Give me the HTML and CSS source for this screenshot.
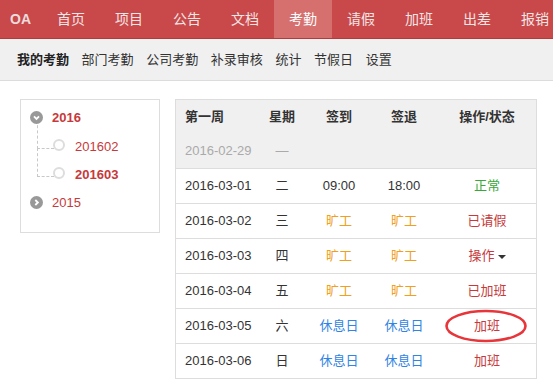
FILE: index.html
```html
<!DOCTYPE html>
<html lang="zh">
<head>
<meta charset="utf-8">
<title>OA 考勤</title>
<link rel="stylesheet" href="styles.css">
</head>
<body>
<header class="navbar">
  <div class="brand">OA</div>
  <nav class="nav">
    <a class="nav-item">首页</a>
    <a class="nav-item">项目</a>
    <a class="nav-item">公告</a>
    <a class="nav-item">文档</a>
    <a class="nav-item active">考勤</a>
    <a class="nav-item">请假</a>
    <a class="nav-item">加班</a>
    <a class="nav-item">出差</a>
    <a class="nav-item">报销</a>
  </nav>
</header>
<div class="subnav">
  <a class="sub-item current">我的考勤</a>
  <a class="sub-item">部门考勤</a>
  <a class="sub-item">公司考勤</a>
  <a class="sub-item">补录审核</a>
  <a class="sub-item">统计</a>
  <a class="sub-item">节假日</a>
  <a class="sub-item">设置</a>
</div>
<main class="main">
  <aside class="tree-box">
    <ul class="tree">
      <li class="year open">
        <div class="row first">
          <svg class="toggle" width="13" height="13" viewBox="0 0 13 13"><circle cx="6.5" cy="6.5" r="6.5" fill="#999"/><path d="M4 5.3 L6.5 7.9 L9 5.3" fill="none" stroke="#fff" stroke-width="1.8"/></svg>
          <span class="label bold">2016</span>
        </div>
        <ul class="children">
          <li class="child"><span class="conn"></span><span class="dot"></span><span class="label">201602</span></li>
          <li class="child"><span class="conn"></span><span class="dot"></span><span class="label bold">201603</span></li>
        </ul>
      </li>
      <li class="year">
        <div class="row">
          <svg class="toggle" width="13" height="13" viewBox="0 0 13 13"><circle cx="6.5" cy="6.5" r="6.5" fill="#999"/><path d="M5.3 4 L7.9 6.5 L5.3 9" fill="none" stroke="#fff" stroke-width="1.8"/></svg>
          <span class="label">2015</span>
        </div>
      </li>
    </ul>
  </aside>
  <table class="att">
    <colgroup>
      <col class="c1"><col class="c2"><col class="c3"><col class="c4"><col class="c5">
    </colgroup>
    <thead>
      <tr class="head">
        <th class="left">第一周</th><th>星期</th><th>签到</th><th>签退</th><th>操作/状态</th>
      </tr>
    </thead>
    <tbody>
      <tr class="off">
        <td class="left">2016-02-29</td><td>—</td><td></td><td></td><td></td>
      </tr>
      <tr>
        <td class="left">2016-03-01</td><td>二</td><td>09:00</td><td>18:00</td><td class="green">正常</td>
      </tr>
      <tr>
        <td class="left">2016-03-02</td><td>三</td><td class="orange">旷工</td><td class="orange">旷工</td><td class="red">已请假</td>
      </tr>
      <tr>
        <td class="left">2016-03-03</td><td>四</td><td class="orange">旷工</td><td class="orange">旷工</td><td class="red">操作<span class="caret"></span></td>
      </tr>
      <tr>
        <td class="left">2016-03-04</td><td>五</td><td class="orange">旷工</td><td class="orange">旷工</td><td class="red">已加班</td>
      </tr>
      <tr>
        <td class="left">2016-03-05</td><td>六</td><td class="blue">休息日</td><td class="blue">休息日</td><td class="red"><span class="mark">加班<svg class="ring" width="84" height="35" viewBox="0 0 84 35"><ellipse cx="42" cy="17.5" rx="39.5" ry="15" fill="none" stroke="#e8353a" stroke-width="2.6"/></svg></span></td>
      </tr>
      <tr>
        <td class="left">2016-03-06</td><td>日</td><td class="blue">休息日</td><td class="blue">休息日</td><td class="red">加班</td>
      </tr>
    </tbody>
  </table>
</main>
</body>
</html>
```
FILE: styles.css
```css
* { box-sizing: border-box; }
html, body { margin: 0; padding: 0; background: #fff; }
body {
  font-family: "Liberation Sans", Arial, "Noto Sans CJK SC", sans-serif;
  font-size: 13px;
  color: #333;
  overflow: hidden;
}
ul { list-style: none; margin: 0; padding: 0; }

.navbar {
  display: flex;
  height: 39px;
  background: #c9494a;
  border-bottom: 1px solid #b23b3c;
  overflow: hidden;
}
.brand {
  flex: none;
  font-size: 14px;
  font-weight: bold;
  line-height: 38px;
  padding: 0 11px 0 10px;
  color: #ecdcdc;
}
.nav { display: flex; flex: none; }
.nav-item {
  flex: none;
  white-space: nowrap;
  font-size: 14px;
  line-height: 38px;
  padding: 0 15px;
  color: #f3e6e6;
}
.nav-item.active { background: #d5706f; color: #fff; }

.subnav {
  display: flex;
  gap: 12.6px;
  height: 42px;
  padding-left: 17px;
  background: #f0f0f0;
  border-bottom: 1px solid #dcdcdc;
  align-items: center;
  white-space: nowrap;
}
.sub-item { flex: none; color: #333; line-height: 41px; }
.sub-item.current { font-weight: bold; color: #222; }

.main {
  display: flex;
  align-items: flex-start;
  gap: 15px;
  padding: 18px 0 0 20px;
}

.tree-box {
  flex: none;
  width: 140px;
  height: 134px;
  border: 1px solid #ddd;
  padding: 3px 0 0 9px;
}
.tree .row {
  display: flex;
  align-items: center;
  height: 28px;
}
.tree .row.first { height: 29px; }
.toggle { display: block; flex: none; position: relative; z-index: 1; }
.tree .label { color: #c7393a; margin-left: 9px; }
.tree .bold { font-weight: bold; }
.child {
  display: flex;
  align-items: center;
  height: 28px;
  padding-left: 7px;
}
.conn {
  position: relative;
  width: 16px;
  height: 28px;
  flex: none;
}
.conn::before {
  content: "";
  position: absolute;
  left: 0;
  top: -12px;
  width: 16px;
  height: 28px;
  border-left: 1px dashed #c8c8c8;
  border-bottom: 1px dashed #c8c8c8;
}
.dot {
  width: 12px;
  height: 12px;
  border-radius: 50%;
  border: 2px solid #ddd;
  background: #fff;
  flex: none;
  margin-top: -2px;
}
.child .label { margin-left: 10px; }

.att {
  flex: none;
  width: 362px;
  table-layout: fixed;
  border-collapse: separate;
  border-spacing: 0;
  border: 1px solid #ddd;
}
.c1 { width: 80px; }
.c2 { width: 52px; }
.c3 { width: 62px; }
.c4 { width: 68px; }
.c5 { width: 98px; }
.att th, .att td {
  padding: 0;
  height: 34px;
  line-height: 34px;
  text-align: center;
  white-space: nowrap;
}
.att th { font-weight: bold; color: #333; background: #f0f0f0; }
.att .left { text-align: left; padding-left: 9px; }
.att tbody td { border-top: 1px solid #ddd; height: 35px; }
.att tr.off td { border-top: 0; height: 34px; background: #f0f0f0; color: #aaa; }

.green { color: #38a83a; }
.orange { color: #f0a01c; }
.blue { color: #2f84e4; }
.red { color: #c7393a; }

.caret {
  display: inline-block;
  width: 0;
  height: 0;
  margin-left: 3px;
  vertical-align: middle;
  border-top: 4px solid #333;
  border-left: 4px solid transparent;
  border-right: 4px solid transparent;
}
.mark { position: relative; display: inline-block; }
.ring {
  position: absolute;
  left: 50%;
  top: 50%;
  transform: translate(-50%, -50%);
  margin-left: -1px;
}
```
